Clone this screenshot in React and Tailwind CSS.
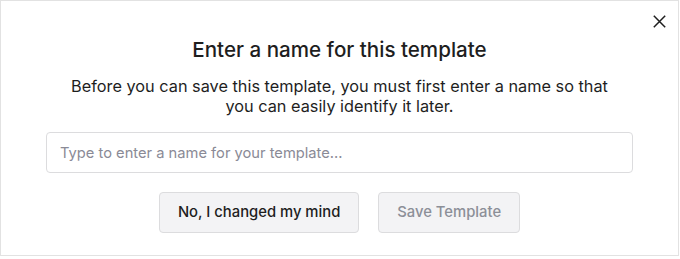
import React from "react";

export default function App() {
  return (
    <div className="w-[680px] h-[259px] bg-white" style={{ fontFamily: "Inter, 'Noto Sans', sans-serif" }}>
      <div className="relative w-[679px] h-[256px] border border-[#e2e2e2] bg-white flex flex-col items-center px-[45px] pt-[35px]">
        <button className="absolute top-[14px] right-[12px] w-[13px] h-[13px] flex items-center justify-center text-[#1e1e1e]" aria-label="Close">
          <svg width="13" height="13" viewBox="0 0 13 13" fill="none">
            <path d="M0.8 0.8L12.2 12.2M12.2 0.8L0.8 12.2" stroke="currentColor" strokeWidth="1.5" />
          </svg>
        </button>
        <h2 className="text-[20.6px] leading-[28px] font-medium text-[#1e1e1e]">Enter a name for this template</h2>
        <p className="mt-[12px] text-[16.3px] leading-[20px] text-[#1e1e1e] text-center">
          Before you can save this template, you must first enter a name so that
          <br />
          you can easily identify it later.
        </p>
        <input
          type="text"
          placeholder="Type to enter a name for your template..."
          className="mt-[16px] w-full h-[41px] rounded-[4px] border border-[#dcdcde] bg-white px-[13px] text-[14.7px] text-[#1e1e1e] placeholder:text-[#8a8a96] outline-none"
        />
        <div className="mt-[19px] flex gap-[19px]">
          <button className="h-[41px] px-[18px] rounded-[4px] border border-[#dcdcde] bg-[#f3f3f5] text-[14.8px] font-medium text-[#1e1e1e]">
            No, I changed my mind
          </button>
          <button className="h-[41px] px-[18px] rounded-[4px] border border-[#dcdcde] bg-[#f3f3f5] text-[14.8px] font-medium text-[#8c8f98]">
            Save Template
          </button>
        </div>
      </div>
    </div>
  );
}
